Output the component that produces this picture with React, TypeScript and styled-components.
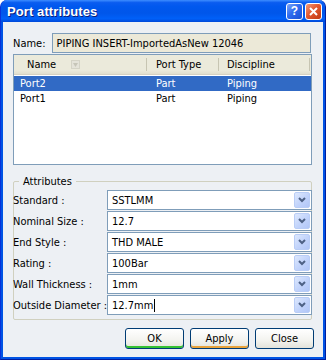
import React from 'react'
import styled, { createGlobalStyle } from 'styled-components'

const GlobalStyle = createGlobalStyle`
  body {
    margin: 0;
    background: #ffffff;
    font-family: "DejaVu Sans Condensed", "DejaVu Sans", sans-serif;
  }
`

const UI_FONT = `11px "DejaVu Sans Condensed", "DejaVu Sans", sans-serif`

const Frame = styled.div`
  width: 326px;
  height: 360px;
  display: flex;
  flex-direction: column;
  box-sizing: border-box;
  background: #0053e4;
  border-radius: 7px 7px 0 0;
  overflow: hidden;
  border-left: 1px solid #0831d9;
  border-right: 1px solid #001ea0;
  border-bottom: 1px solid #001ea0;
`

const TitleBar = styled.div`
  height: 22px;
  flex: none;
  display: flex;
  align-items: center;
  padding: 0 3px 0 6px;
  background: linear-gradient(
    to bottom,
    #3d8dff 0%,
    #0a5cf0 12%,
    #0058ee 30%,
    #0056ea 60%,
    #0060f8 85%,
    #0048d8 100%
  );
`

const Title = styled.div`
  flex: 1;
  color: #ffffff;
  font: bold 13px "Liberation Sans", Arial, sans-serif;
  text-shadow: 1px 1px 0 #0a1e7a;
  letter-spacing: 0.1px;
`

const CapButton = styled.div<{ danger?: boolean }>`
  width: 17px;
  height: 17px;
  box-sizing: border-box;
  margin-left: 2px;
  border: 1px solid #ffffff;
  border-radius: 3px;
  display: flex;
  align-items: center;
  justify-content: center;
  color: #ffffff;
  font: bold 12px "Liberation Sans", Arial, sans-serif;
  background: ${({ danger }) =>
    danger
      ? 'linear-gradient(135deg, #f29a7b 0%, #e2582f 45%, #c13a12 100%)'
      : 'linear-gradient(135deg, #7fa6f8 0%, #2f6cf0 45%, #1b4fd2 100%)'};
`

const Body = styled.div`
  flex: 1;
  margin: 0 2px 2px 2px;
  background: #edf0f4;
  padding: 11px 12px 0 10px;
  display: flex;
  flex-direction: column;
  font: ${UI_FONT};
  color: #000000;
`

const NameRow = styled.div`
  display: flex;
  align-items: center;
  gap: 6px;
`

const Label = styled.span`
  font: ${UI_FONT};
  white-space: nowrap;
`

const NameField = styled.div`
  flex: 1;
  height: 20px;
  box-sizing: border-box;
  border: 1px solid #7f9db9;
  background: #ece9d8;
  display: flex;
  align-items: center;
  padding-left: 4px;
  font: ${UI_FONT};
`

const List = styled.div`
  margin-top: 1px;
  margin-right: -1px;
  height: 111px;
  box-sizing: border-box;
  border: 1px solid #7f9db9;
  background: #ffffff;
  display: flex;
  flex-direction: column;
`

const HeaderRow = styled.div`
  display: grid;
  grid-template-columns: 133px 72px 91px;
  height: 19px;
  background: linear-gradient(to bottom, #ebeadb 0%, #ebeadb 80%, #e2dfce 100%);
  border-bottom: 1px solid #d6d2c2;
`

const HeaderCell = styled.div<{ indent: number }>`
  display: flex;
  align-items: center;
  padding-left: ${({ indent }) => indent}px;
  border-right: 1px solid #c7c5b2;
  margin: 3px 0;
  font: ${UI_FONT};
`

const SortMark = styled.span`
  margin-left: 15px;
  width: 7px;
  height: 7px;
  background: #e4e3d9;
  border: 1px solid #d4d3c6;
  display: flex;
  align-items: center;
  justify-content: center;
`

const DataRow = styled.div<{ selected?: boolean }>`
  display: grid;
  grid-template-columns: 133px 72px 91px;
  height: 15px;
  align-items: center;
  background: ${({ selected }) => (selected ? '#316ac5' : 'transparent')};
  color: ${({ selected }) => (selected ? '#ffffff' : '#000000')};
  font: ${UI_FONT};
  margin-top: ${({ selected }) => (selected ? '1px' : '0')};
`

const Cell = styled.div<{ indent: number }>`
  padding-left: ${({ indent }) => indent}px;
`

const Group = styled.fieldset`
  margin: 10px -1px 0 0;
  padding: 2px 0 0 0;
  border: 1px solid #d0d0bf;
  border-radius: 2px;
  display: grid;
  grid-template-columns: 93px 1fr;
  row-gap: 1px;
  align-items: center;
  height: 145px;
  box-sizing: border-box;
`

const Legend = styled.legend`
  margin-left: 5px;
  padding: 0 4px;
  font: ${UI_FONT};
`

const FieldLabel = styled.span`
  font: ${UI_FONT};
  white-space: nowrap;
  margin-left: -1px;
`

const Combo = styled.div`
  height: 20px;
  box-sizing: border-box;
  border: 1px solid #7f9db9;
  background: #ffffff;
  display: flex;
  align-items: center;
  margin-right: -1px;
`

const ComboText = styled.span`
  flex: 1;
  padding-left: 4px;
  font: ${UI_FONT};
  display: flex;
  align-items: center;
`

const Caret = styled.span`
  width: 1px;
  height: 13px;
  background: #000000;
  margin-left: 1px;
`

const DropButton = styled.div`
  width: 16px;
  height: 16px;
  margin-right: 1px;
  box-sizing: border-box;
  border: 1px solid #b9cdf6;
  border-radius: 2px;
  background: linear-gradient(135deg, #dde8fd 0%, #c1d3fb 55%, #b1c6f7 100%);
  display: flex;
  align-items: center;
  justify-content: center;
`

const ButtonBar = styled.div`
  display: flex;
  justify-content: flex-end;
  gap: 6px;
  margin-top: 8px;
  margin-right: -3px;
`

const PushButton = styled.button<{ accent?: string }>`
  width: 59px;
  height: 21px;
  box-sizing: border-box;
  border: 1px solid #003c74;
  border-radius: 3px;
  background: linear-gradient(to bottom, #ffffff 0%, #f3f3ef 60%, #e3e2da 100%);
  box-shadow: ${({ accent }) => (accent ? `inset 0 -2px 0 ${accent}` : 'none')};
  font: ${UI_FONT};
  color: #000000;
  padding: 0;
`

const Chevron = () => (
  <svg width="8" height="6" viewBox="0 0 8 6">
    <path d="M1 1 L4 4 L7 1" stroke="#4d6185" strokeWidth="2" fill="none" />
  </svg>
)

const attributes: { label: string; value: string; editing?: boolean }[] = [
  { label: 'Standard :', value: 'SSTLMM' },
  { label: 'Nominal Size :', value: '12.7' },
  { label: 'End Style :', value: 'THD MALE' },
  { label: 'Rating :', value: '100Bar' },
  { label: 'Wall Thickness :', value: '1mm' },
  { label: 'Outside Diameter :', value: '12.7mm', editing: true },
]

const ports = [
  { name: 'Port2', type: 'Part', discipline: 'Piping', selected: true },
  { name: 'Port1', type: 'Part', discipline: 'Piping' },
]

export default function App() {
  return (
    <>
      <GlobalStyle />
      <Frame>
        <TitleBar>
          <Title>Port attributes</Title>
          <CapButton>?</CapButton>
          <CapButton danger>
            <svg width="9" height="9" viewBox="0 0 9 9">
              <path d="M1 1 L8 8 M8 1 L1 8" stroke="#ffffff" strokeWidth="2" />
            </svg>
          </CapButton>
        </TitleBar>
        <Body>
          <NameRow>
            <Label>Name:</Label>
            <NameField>PIPING INSERT-ImportedAsNew 12046</NameField>
          </NameRow>
          <List>
            <HeaderRow>
              <HeaderCell indent={13}>
                Name
                <SortMark>
                  <svg width="5" height="4" viewBox="0 0 5 4">
                    <path d="M0 0 L5 0 L2.5 4 Z" fill="#c6c5b8" />
                  </svg>
                </SortMark>
              </HeaderCell>
              <HeaderCell indent={9}>Port Type</HeaderCell>
              <HeaderCell indent={8}>Discipline</HeaderCell>
            </HeaderRow>
            {ports.map((p) => (
              <DataRow key={p.name} selected={p.selected}>
                <Cell indent={6}>{p.name}</Cell>
                <Cell indent={9}>{p.type}</Cell>
                <Cell indent={8}>{p.discipline}</Cell>
              </DataRow>
            ))}
          </List>
          <Group>
            <Legend>Attributes</Legend>
            {attributes.map((a) => (
              <React.Fragment key={a.label}>
                <FieldLabel>{a.label}</FieldLabel>
                <Combo>
                  <ComboText>
                    {a.value}
                    {a.editing && <Caret />}
                  </ComboText>
                  <DropButton>
                    <Chevron />
                  </DropButton>
                </Combo>
              </React.Fragment>
            ))}
          </Group>
          <ButtonBar>
            <PushButton accent="#34c133">OK</PushButton>
            <PushButton accent="#e8a33c">Apply</PushButton>
            <PushButton>Close</PushButton>
          </ButtonBar>
        </Body>
      </Frame>
    </>
  )
}
